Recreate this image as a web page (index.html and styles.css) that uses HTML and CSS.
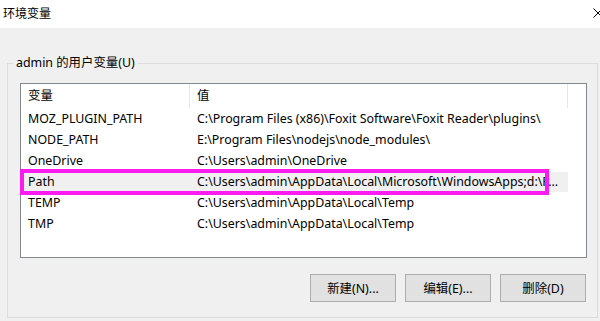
FILE: index.html
```html
<!DOCTYPE html>
<html lang="zh-CN">
<head>
  <meta charset="UTF-8">
  <meta name="viewport" content="width=device-width, initial-scale=1.0">
  <title>环境变量</title>
  <link rel="stylesheet" href="styles.css">
</head>
<body>
  <div class="titlebar">
    <span class="title">环境变量</span>
    <svg class="close" width="10" height="10" viewBox="0 0 10 10">
      <path d="M0.5 0.5 L9.5 9.5 M9.5 0.5 L0.5 9.5" stroke="#000" stroke-width="1" fill="none"/>
    </svg>
  </div>

  <div class="content">
    <fieldset class="group">
      <legend>admin 的用户变量(U)</legend>

      <!-- List of variables -->
      <div class="list">
        <div class="list-head">
          <div class="head-cell col-name">变量</div>
          <div class="head-cell col-value">值</div>
        </div>
        <div class="rows">
          <div class="row">
            <div class="cell col-name">MOZ_PLUGIN_PATH</div>
            <div class="cell col-value">C:\Program Files (x86)\Foxit Software\Foxit Reader\plugins\</div>
          </div>
          <div class="row">
            <div class="cell col-name">NODE_PATH</div>
            <div class="cell col-value">E:\Program Files\nodejs\node_modules\</div>
          </div>
          <div class="row">
            <div class="cell col-name">OneDrive</div>
            <div class="cell col-value">C:\Users\admin\OneDrive</div>
          </div>
          <div class="row selected">
            <div class="cell col-name">Path</div>
            <div class="cell col-value">C:\Users\admin\AppData\Local\Microsoft\WindowsApps;d:\P...</div>
          </div>
          <div class="row">
            <div class="cell col-name">TEMP</div>
            <div class="cell col-value">C:\Users\admin\AppData\Local\Temp</div>
          </div>
          <div class="row">
            <div class="cell col-name">TMP</div>
            <div class="cell col-value">C:\Users\admin\AppData\Local\Temp</div>
          </div>
        </div>
        <div class="mark"></div>
      </div>

      <div class="buttons">
        <button>新建(N)...</button>
        <button>编辑(E)...</button>
        <button>删除(D)</button>
      </div>
    </fieldset>
  </div>
</body>
</html>
```
FILE: styles.css
```css
* {
  box-sizing: border-box;
}
body {
  margin: 0;
  width: 600px;
  height: 321px;
  overflow: hidden;
  font-family: 'Noto Sans', 'Noto Sans CJK SC', sans-serif;
  font-size: 12.4px;
  color: #000;
  background: #f0f0f0;
}
.titlebar {
  height: 28px;
  background: #fff;
  display: flex;
  align-items: center;
  justify-content: space-between;
  padding-left: 3px;
}
.title {
  font-family: 'Noto Sans CJK SC', sans-serif;
  font-size: 12px;
  line-height: 16px;
  margin-top: -2px;
}
.close {
  margin-right: -3px;
  margin-top: -2px;
}
.content {
  padding: 27px 0 0 7px;
}
.group {
  width: 591px;
  height: 263px;
  margin: 0;
  padding: 12px 10px 16px 12px;
  border: 1px solid #dcdcdc;
}
.group legend {
  margin-left: -7px;
  padding: 0 3px;
  line-height: 16px;
}
.list {
  position: relative;
  height: 175px;
  background: #fff;
  border: 1px solid #828790;
}
.list-head {
  display: flex;
  height: 24px;
}
.head-cell {
  line-height: 24px;
  padding-left: 7px;
  border-right: 1px solid #e5e5e5;
}
.list-head .col-name {
  width: 169px;
}
.list-head .col-value {
  width: 378px;
}
.rows {
  padding-top: 1px;
}
.row {
  display: flex;
  height: 20px;
  margin: 0 0 1px 3px;
  width: 544px;
  line-height: 20px;
}
.row .col-name {
  width: 166px;
  padding-left: 4px;
}
.row .col-value {
  width: 378px;
  padding-left: 7px;
  white-space: nowrap;
}
.row.selected {
  background: #f0f0f0;
}
.mark {
  position: absolute;
  left: -1px;
  top: 85px;
  width: 529px;
  height: 26px;
  border: 4px solid #fc1cf2;
}
.buttons {
  display: flex;
  justify-content: flex-end;
  gap: 9px;
  margin-top: 16px;
  padding-right: 1px;
}
.buttons button {
  width: 86px;
  height: 28px;
  padding: 0;
  font-family: inherit;
  font-size: 12.4px;
  color: #000;
  background: #e1e1e1;
  border: 1px solid #adadad;
  border-radius: 0;
}
```
